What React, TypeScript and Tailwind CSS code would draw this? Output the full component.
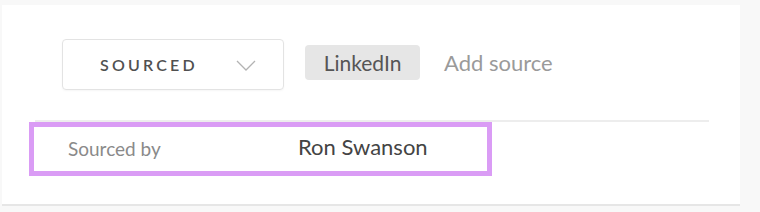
export default function App() {
  return (
    <div className="w-[760px] h-[212px] bg-[#f8f8f8] pt-[5px] pl-[2px] font-['Lato','Noto_Sans',sans-serif]">
      <div className="w-[738px] h-[201px] bg-white border-b-2 border-[#e6e6e6]">
        {/* source row */}
        <div className="flex items-center pl-[60px] pt-[34px]">
          <button className="flex items-center justify-between w-[222px] h-[51px] rounded-[4px] border border-[#e3e3e3] pl-[37px] pr-[27px] shadow-[0_1px_2px_rgba(0,0,0,0.04)]">
            <span className="text-[16px] font-semibold tracking-[0.2em] text-[#505050]">SOURCED</span>
            <svg width="20" height="11" viewBox="0 0 20 11" fill="none" className="mt-[1px]">
              <polyline points="1,1 10,10 19,1" stroke="#b3b3b3" strokeWidth="1.3" />
            </svg>
          </button>
          <span className="ml-[21px] mb-[4px] w-[115px] h-[35px] flex items-center justify-center rounded-[4px] bg-[#e6e6e6] text-[21px] text-[#555]">
            LinkedIn
          </span>
          <span className="ml-[24px] mb-[4px] text-[22px] text-[#9a9a9a]">Add source</span>
        </div>

        <div className="ml-[33px] mr-[31px] mt-[30px] h-[2px] bg-[#ededed]" />

        {/* highlighted row */}
        <div className="ml-[27px] w-[463px] h-[54px] border-[5px] border-[#da9cf5] flex items-center">
          <span className="w-[264px] pl-[34px] text-[19px] text-[#8a8a8a]">Sourced by</span>
          <span className="mb-[6px] text-[22px] text-[#444]">Ron Swanson</span>
        </div>
      </div>
    </div>
  )
}
